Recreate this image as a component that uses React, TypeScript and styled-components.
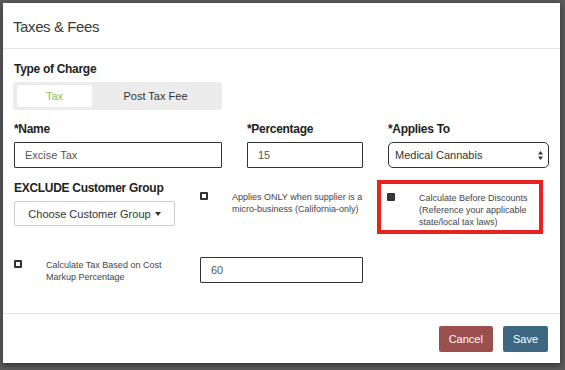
import React from "react";
import styled, { createGlobalStyle } from "styled-components";

const GlobalStyle = createGlobalStyle`
  html, body {
    margin: 0;
    padding: 0;
    background: #5b5b5b;
    font-family: "Liberation Sans", Arial, sans-serif;
  }
`;

const Backdrop = styled.div`
  width: 565px;
  height: 370px;
  padding: 3px 5px 7px 3px;
  box-sizing: border-box;
  background: #5b5b5b;
`;

const Modal = styled.div`
  width: 557px;
  height: 360px;
  background: #fff;
  display: flex;
  flex-direction: column;
  box-shadow: 0 2px 6px rgba(0, 0, 0, 0.5);
`;

const Header = styled.div`
  height: 46px;
  box-sizing: border-box;
  border-bottom: 1px solid #e3e3e3;
  display: flex;
  align-items: center;
  padding: 2px 0 0 10px;
`;

const Title = styled.h4`
  margin: 0;
  font-size: 15px;
  font-weight: 400;
  color: #3a3a3a;
  letter-spacing: -0.4px;
`;

const Body = styled.div`
  flex: 1;
  padding: 13px 11px 0 11px;
  border-bottom: 1px solid #e3e3e3;
`;

const Label = styled.div`
  font-size: 12px;
  font-weight: 700;
  color: #222;
  letter-spacing: -0.3px;
  margin-bottom: 6px;
`;

const Segmented = styled.div`
  display: flex;
  width: 209px;
  height: 28px;
  box-sizing: border-box;
  padding: 3px 3px 3px 4px;
  margin-left: -1px;
  background: #ececec;
  border-radius: 3px;
`;

const Segment = styled.div<{ $active?: boolean }>`
  width: ${({ $active }) => ($active ? "75px" : "auto")};
  flex: ${({ $active }) => ($active ? "none" : "1")};
  display: flex;
  align-items: center;
  justify-content: center;
  font-size: 11px;
  border-radius: 3px;
  background: ${({ $active }) => ($active ? "#fff" : "transparent")};
  color: ${({ $active }) => ($active ? "#8cc152" : "#333")};
`;

const FieldRow = styled.div`
  display: grid;
  grid-template-columns: 208px 116px 161px;
  column-gap: 25px;
  margin-top: 12px;
`;

const Field = styled.div`
  display: flex;
  flex-direction: column;
`;

const Input = styled.div<{ $width?: number }>`
  height: 26px;
  box-sizing: border-box;
  border: 1px solid #333;
  border-radius: 1px;
  padding: 0 10px;
  display: flex;
  align-items: center;
  font-size: 11px;
  color: #555;
  width: ${({ $width }) => ($width ? `${$width}px` : "auto")};
`;

const Select = styled(Input)`
  border-radius: 5px;
  justify-content: space-between;
  padding: 0 4px 0 6px;
  color: #333;
`;

const OptionRow = styled.div`
  display: flex;
  align-items: flex-start;
  margin-top: 13px;
`;

const ExcludeCol = styled.div`
  width: 186px;
`;

const DropdownButton = styled.div`
  width: 161px;
  height: 25px;
  box-sizing: border-box;
  border: 1px solid #ccc;
  border-radius: 2px;
  display: flex;
  align-items: center;
  justify-content: center;
  font-size: 11px;
  color: #333;
`;

const Caret = styled.span`
  display: inline-block;
  margin-left: 4px;
  border-top: 4px solid #333;
  border-left: 3px solid transparent;
  border-right: 3px solid transparent;
  vertical-align: middle;
`;

const CheckOption = styled.div<{ $gap: number; $width: number; $top?: number }>`
  display: flex;
  align-items: flex-start;
  gap: ${({ $gap }) => $gap}px;
  width: ${({ $width }) => $width}px;
  margin-top: ${({ $top }) => $top ?? 0}px;
`;

const Box = styled.span<{ $filled?: boolean }>`
  flex: none;
  width: 8px;
  height: 8px;
  box-sizing: border-box;
  margin-top: 1px;
  border: 2px solid #333;
  border-radius: 1px;
  background: ${({ $filled }) => ($filled ? "#3a3a3a" : "#fff")};
`;

const SmallText = styled.div<{ $max?: number }>`
  font-size: 9px;
  line-height: 12px;
  color: #444;
  max-width: ${({ $max }) => ($max ? `${$max}px` : "none")};
`;

const Highlight = styled.div`
  margin: -1px 0 0 13px;
  width: 166px;
  height: 54px;
  box-sizing: border-box;
  border: 4px solid #e8231f;
  padding: 8px 6px 0 6px;
`;

const MarkupRow = styled.div`
  display: flex;
  align-items: flex-start;
  margin-top: 23px;
`;

const Footer = styled.div`
  height: 49px;
  display: flex;
  align-items: center;
  justify-content: flex-end;
  gap: 10px;
  padding-right: 12px;
`;

const Button = styled.div<{ $color: string }>`
  height: 26px;
  padding: 0 10px;
  display: flex;
  align-items: center;
  border-radius: 2px;
  font-size: 11px;
  color: #fff;
  background: ${({ $color }) => $color};
`;

export default function App() {
  return (
    <>
      <GlobalStyle />
      <Backdrop>
        <Modal>
          <Header>
            <Title>Taxes &amp; Fees</Title>
          </Header>
          <Body>
            <Label>Type of Charge</Label>
            <Segmented>
              <Segment $active>Tax</Segment>
              <Segment>Post Tax Fee</Segment>
            </Segmented>

            <FieldRow>
              <Field>
                <Label>*Name</Label>
                <Input>Excise Tax</Input>
              </Field>
              <Field>
                <Label>*Percentage</Label>
                <Input>15</Input>
              </Field>
              <Field>
                <Label>*Applies To</Label>
                <Select>
                  Medical Cannabis
                  <svg width="7" height="11" viewBox="0 0 7 11">
                    <path d="M3.5 1 L6 4.5 H1 Z M3.5 10 L6 6.5 H1 Z" fill="#333" />
                  </svg>
                </Select>
              </Field>
            </FieldRow>

            <OptionRow>
              <ExcludeCol>
                <Label>EXCLUDE Customer Group</Label>
                <DropdownButton>
                  Choose Customer Group
                  <Caret />
                </DropdownButton>
              </ExcludeCol>
              <CheckOption $gap={24} $width={164} $top={10}>
                <Box />
                <SmallText>
                  Applies ONLY when supplier is a micro-business (California-only)
                </SmallText>
              </CheckOption>
              <Highlight>
                <CheckOption $gap={24} $width={146}>
                  <Box $filled />
                  <SmallText>
                    Calculate Before Discounts (Reference your applicable
                    state/local tax laws)
                  </SmallText>
                </CheckOption>
              </Highlight>
            </OptionRow>

            <MarkupRow>
              <CheckOption $gap={24} $width={186} $top={2}>
                <Box />
                <SmallText $max={124}>
                  Calculate Tax Based on Cost Markup Percentage
                </SmallText>
              </CheckOption>
              <Input $width={163}>60</Input>
            </MarkupRow>
          </Body>
          <Footer>
            <Button $color="#9b4f4e">Cancel</Button>
            <Button $color="#3e6882">Save</Button>
          </Footer>
        </Modal>
      </Backdrop>
    </>
  );
}
